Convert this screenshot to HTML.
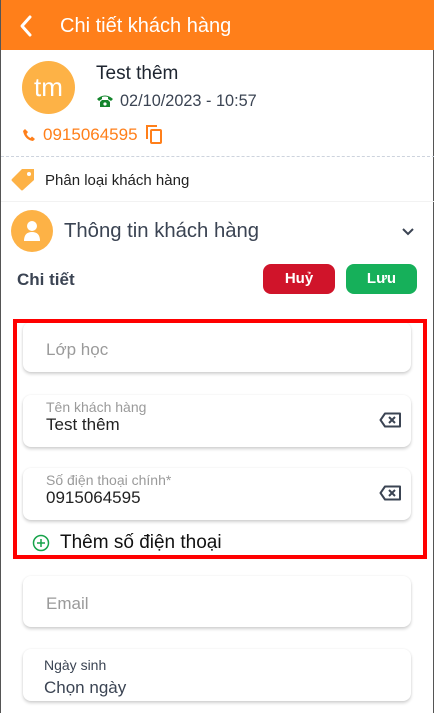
<!DOCTYPE html>
<html><head><meta charset="utf-8"><style>
*{margin:0;padding:0;box-sizing:border-box}
body{width:434px;height:713px;overflow:hidden;background:#fff;font-family:"Liberation Sans",sans-serif;position:relative;border-left:1px solid #555;border-right:1px solid #555}
.a{position:absolute}
.hdr{left:0;top:0;width:434px;height:50px;background:#FF7F1A}
.field{position:absolute;left:22px;width:388px;background:#fff;border-radius:8px;box-shadow:0 2px 3px rgba(0,0,0,.18),0 0 2px rgba(0,0,0,.06)}
.lbl{position:absolute;left:23px;font-size:14px;color:#9a9a9a}
.val{position:absolute;left:23px;font-size:17px;color:#222}
.ph{position:absolute;left:23px;font-size:17px;color:#9a9a9a}
</style></head><body>
<div class="a hdr"></div>
<svg class="a" style="left:17px;top:14px" width="16" height="24"><path d="M12 3 L4 12 L12 21" stroke="#fff" stroke-width="3" fill="none" stroke-linecap="round" stroke-linejoin="round"/></svg>
<div class="a" style="left:59px;top:15px;font-size:20px;color:#fff">Chi tiết khách hàng</div>

<div class="a" style="left:21px;top:61px;width:53px;height:53px;border-radius:50%;background:#FDB246;color:#fff;font-size:26px;text-align:center;line-height:52px">tm</div>
<div class="a" style="left:95px;top:63px;font-size:19px;color:#1e2530">Test thêm</div>
<svg class="a" style="left:95px;top:93px" width="18" height="16"><path d="M1 6 Q9 -1 17 6 L15 8 L12 6 L12 4 Q9 3 6 4 L6 6 L3 8Z" fill="#14852c"/><path d="M4 9 L6 7 H12 L14 9 V14 H4Z" fill="#14852c"/><circle cx="9" cy="11" r="1.6" fill="#fff"/></svg>
<div class="a" style="left:119px;top:92px;font-size:16.3px;color:#3b4453">02/10/2023 - 10:57</div>
<svg class="a" style="left:21px;top:128px" width="14" height="14"><path d="M3 1 L6 4 L4.5 6 Q6 9 8.5 10 L10 8.5 L13 11 L11 13 Q3 12 1 3Z" fill="#FF7F1A"/></svg>
<div class="a" style="left:42px;top:125px;font-size:17px;color:#FF7F1A">0915064595</div>
<svg class="a" style="left:144px;top:124px" width="20" height="22"><path d="M2 15 V2 H12" stroke="#FF7F1A" stroke-width="2" fill="none"/><rect x="6" y="6" width="10" height="13" stroke="#FF7F1A" stroke-width="2" fill="none" rx="1"/></svg>
<div class="a" style="left:0;top:156px;width:434px;border-top:1px dashed #cdd3dd"></div>
<svg class="a" style="left:9px;top:167px" width="26" height="24"><path d="M12 2 H24 V13 L13 23 Q12 24 11 23 L2 14 Q1 13 2 12Z" fill="#FDB246"/><circle cx="19" cy="7" r="2" fill="#fff"/></svg>
<div class="a" style="left:44px;top:172px;font-size:15px;color:#222">Phân loại khách hàng</div>
<div class="a" style="left:0;top:201px;width:434px;border-top:1px solid #f2f2f2"></div>
<div class="a" style="left:10px;top:210px;width:42px;height:42px;border-radius:50%;background:#FDB246"></div>
<svg class="a" style="left:21px;top:220px" width="20" height="22"><circle cx="10" cy="6" r="5" fill="#fff"/><path d="M2 21 Q2 12 10 12 Q18 12 18 21Z" fill="#fff"/></svg>
<div class="a" style="left:63px;top:220px;font-size:20.3px;color:#3b4453">Thông tin khách hàng</div>
<svg class="a" style="left:400px;top:227px" width="14" height="10"><path d="M2 2 L7 7 L12 2" stroke="#3b4453" stroke-width="2" fill="none"/></svg>
<div class="a" style="left:16px;top:270px;font-size:17px;font-weight:bold;color:#3b4453">Chi tiết</div>
<div class="a" style="left:262px;top:264px;width:72px;height:30px;border-radius:8px;background:#D0142A;color:#fff;font-weight:bold;font-size:15px;text-align:center;line-height:30px">Huỷ</div>
<div class="a" style="left:345px;top:264px;width:71px;height:30px;border-radius:8px;background:#16B05A;color:#fff;font-weight:bold;font-size:15px;text-align:center;line-height:30px">Lưu</div>

<div class="field" style="top:322px;height:50px"><div class="ph" style="top:18px">Lớp học</div></div>
<div class="field" style="top:395px;height:52px"><div class="lbl" style="top:4px">Tên khách hàng</div><div class="val" style="top:20px">Test thêm</div>
<svg class="a" style="left:356px;top:17px" width="23" height="16"><path d="M6 1.5 H21 V14.5 H6 L1.5 8Z" stroke="#3b4453" stroke-width="2" fill="none" stroke-linejoin="round"/><path d="M10 5 L16 11 M16 5 L10 11" stroke="#3b4453" stroke-width="2"/></svg></div>
<div class="field" style="top:468px;height:52px"><div class="lbl" style="top:4px">Số điện thoại chính*</div><div class="val" style="top:20px">0915064595</div>
<svg class="a" style="left:356px;top:17px" width="23" height="16"><path d="M6 1.5 H21 V14.5 H6 L1.5 8Z" stroke="#3b4453" stroke-width="2" fill="none" stroke-linejoin="round"/><path d="M10 5 L16 11 M16 5 L10 11" stroke="#3b4453" stroke-width="2"/></svg></div>
<svg class="a" style="left:31px;top:534px" width="18" height="18"><circle cx="9" cy="9" r="7.5" stroke="#16a34a" stroke-width="1.5" fill="none"/><path d="M9 5 V13 M5 9 H13" stroke="#16a34a" stroke-width="1.5"/></svg>
<div class="a" style="left:59px;top:532px;font-size:19px;color:#111">Thêm số điện thoại</div>
<div class="a" style="left:12px;top:319px;width:414px;height:240px;border:4px solid #f00"></div>

<div class="field" style="top:576px;height:51px"><div class="ph" style="top:18px">Email</div></div>
<div class="field" style="top:649px;height:52px"><div class="lbl" style="left:21px;top:8px;color:#3b4453">Ngày sinh</div><div class="val" style="left:21px;top:29px;color:#3b4453">Chọn ngày</div></div>
</body></html>
